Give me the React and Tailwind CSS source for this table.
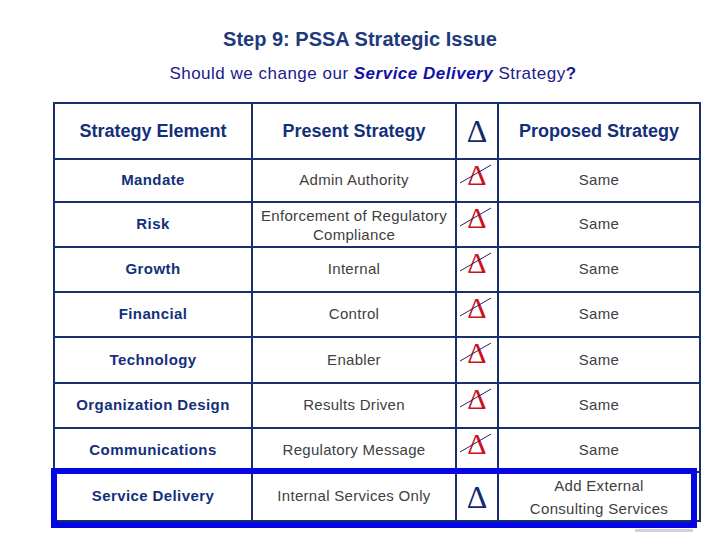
import React from "react";

const rows = [
  { label: "Mandate", present: "Admin Authority", proposed: "Same" },
  { label: "Risk", present: "Enforcement of Regulatory Compliance", proposed: "Same", tight: true },
  { label: "Growth", present: "Internal", proposed: "Same" },
  { label: "Financial", present: "Control", proposed: "Same" },
  { label: "Technology", present: "Enabler", proposed: "Same" },
  { label: "Organization Design", present: "Results Driven", proposed: "Same" },
  { label: "Communications", present: "Regulatory Message", proposed: "Same" },
];

// red delta with a thin strike line across it
function CrossedDelta() {
  return (
    <div className="relative h-[30px] w-full">
      <span className="block text-center font-['Liberation_Serif','Times_New_Roman',serif] text-[30px] leading-[30px] text-[#cc1020]">
        Δ
      </span>
      <svg className="absolute inset-0" width="40" height="30" viewBox="0 0 40 30">
        <line x1="3" y1="23" x2="34" y2="5" stroke="#2b1f6e" strokeWidth="1" />
      </svg>
    </div>
  );
}

function Cell({ children, className = "" }) {
  return (
    <div className={`border-r-2 border-b-2 border-[#1a2e6c] flex items-center justify-center text-center ${className}`}>
      {children}
    </div>
  );
}

export default function App() {
  return (
    <div className="w-[720px] h-[540px] bg-white font-['Liberation_Sans',Arial,sans-serif] flex flex-col">
      {/* Title */}
      <h1 className="mt-[27px] text-center text-[20px] leading-[24px] font-bold text-[#1d3a7c]">
        Step 9: PSSA Strategic Issue
      </h1>
      <p className="mt-[12px] pl-[26px] text-center text-[17px] leading-[22px] text-[#1a1a8c] tracking-[0.5px]">
        Should we change our <span className="font-bold italic text-[#1212a8]">Service Delivery</span> Strategy<span className="font-bold">?</span>
      </p>

      {/* Table */}
      <div className="relative ml-[53px] mt-[17px] w-[648px]">
        <div className="grid grid-cols-[198px_204px_42px_202px] grid-rows-[56px_43px_45px_45px_45px_46px_45px_44px_49px] border-t-2 border-l-2 border-[#1a2e6c]">
          {/* Header */}
          <Cell className="text-[18px] font-bold text-[#13307a]">Strategy Element</Cell>
          <Cell className="text-[18px] font-bold text-[#13307a]">Present Strategy</Cell>
          <Cell className="font-['Liberation_Serif','Times_New_Roman',serif] text-[32px] leading-none text-[#142a70]">Δ</Cell>
          <Cell className="text-[18px] font-bold text-[#13307a]">Proposed Strategy</Cell>

          {rows.map((r) => (
            <React.Fragment key={r.label}>
              <Cell className="text-[15px] font-bold tracking-[0.4px] text-[#13307a]">{r.label}</Cell>
              <Cell className={`text-[15px] tracking-[0.3px] text-[#404040] ${r.tight ? "leading-[19px] px-1" : ""}`}>
                {r.present}
              </Cell>
              <div className="border-r-2 border-b-2 border-[#1a2e6c]">
                <CrossedDelta />
              </div>
              <Cell className="text-[15px] tracking-[0.3px] text-[#404040]">{r.proposed}</Cell>
            </React.Fragment>
          ))}

          {/* Highlighted row */}
          <Cell className="text-[15px] font-bold tracking-[0.4px] text-[#13307a]">Service Delivery</Cell>
          <Cell className="text-[15px] tracking-[0.3px] text-[#404040]">Internal Services Only</Cell>
          <Cell className="font-['Liberation_Serif','Times_New_Roman',serif] text-[32px] leading-none text-[#142a70]">Δ</Cell>
          <Cell className="text-[15px] leading-[23px] tracking-[0.3px] text-[#404040]">
            Add External<br />Consulting Services
          </Cell>
        </div>

        {/* blue highlight frame over the last row */}
        <div className="absolute left-[-2px] top-[366px] w-[646px] h-[60px] border-[6px] border-[#0606e4]" />

        <div className="mt-[7px] ml-[582px] w-[58px] h-[3px] bg-[#cdd1e8]" />
      </div>
    </div>
  );
}
